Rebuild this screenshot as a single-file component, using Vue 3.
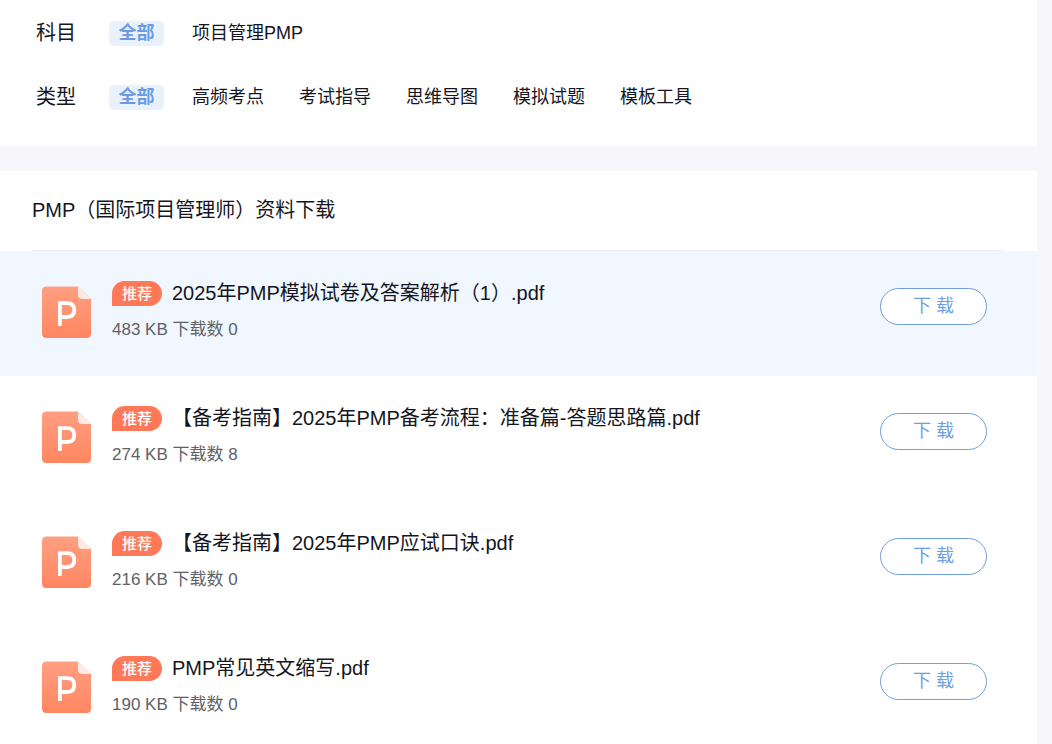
<script setup>
import { ref } from 'vue'

const filters = [
  { key: 'subject', label: '科目', options: ['全部', '项目管理PMP'] },
  { key: 'type', label: '类型', options: ['全部', '高频考点', '考试指导', '思维导图', '模拟试题', '模板工具'] },
]
const selected = ref({ subject: '全部', type: '全部' })

const files = [
  { name: '2025年PMP模拟试卷及答案解析（1）.pdf', size: '483 KB', count: 0 },
  { name: '【备考指南】2025年PMP备考流程：准备篇-答题思路篇.pdf', size: '274 KB', count: 8 },
  { name: '【备考指南】2025年PMP应试口诀.pdf', size: '216 KB', count: 0 },
  { name: 'PMP常见英文缩写.pdf', size: '190 KB', count: 0 },
]
const active = ref(0)
</script>

<template>
  <div class="page">
    <section class="panel filters">
      <div v-for="f in filters" :key="f.key" class="filter">
        <span class="label">{{ f.label }}</span>
        <div class="options" role="group" :aria-label="f.label">
          <button
            v-for="o in f.options"
            :key="o"
            type="button"
            class="option"
            :class="{ on: selected[f.key] === o }"
            :aria-pressed="selected[f.key] === o"
            @click="selected[f.key] = o"
          >{{ o }}</button>
        </div>
      </div>
    </section>

    <section class="panel">
      <h1 class="heading">PMP（国际项目管理师）资料下载</h1>
      <ul class="list">
        <li
          v-for="(file, i) in files"
          :key="file.name"
          class="row"
          :class="{ active: active === i }"
          @mouseenter="active = i"
        >
          <svg class="icon" viewBox="0 0 50 53" aria-hidden="true">
            <defs>
              <linearGradient :id="'sheet' + i" x1="0" y1="0" x2="0" y2="1">
                <stop offset="0" stop-color="#ff9f82" />
                <stop offset="1" stop-color="#ff8661" />
              </linearGradient>
            </defs>
            <path :fill="'url(#sheet' + i + ')'" d="M5.5 .5H37L50 13V47.5Q50 52 45.5 52H5.5Q1 52 1 47.5V5Q1 .5 5.5 .5Z" />
            <path fill="#ffe9e2" d="M37 .5L50 13H41.5Q37 13 37 8.5Z" />
            <path fill="none" stroke="#fff" stroke-width="3.8" d="M18.9 40V17.2H26Q33.3 17.2 33.3 24Q33.3 31 26 31H18.9" />
          </svg>
          <div class="info">
            <div class="title">
              <span class="tag">推荐</span>
              <a class="name" href="#">{{ file.name }}</a>
            </div>
            <div class="meta">{{ file.size }} 下载数 {{ file.count }}</div>
          </div>
          <button type="button" class="download">下 载</button>
        </li>
      </ul>
    </section>
  </div>
</template>

<style>
body {
  margin: 0;
  background: #f6f6fb;
}
</style>

<style scoped>
.page {
  display: flex;
  flex-direction: column;
  gap: 25px;
  padding-right: 15px;
  color: #15161d;
  font-family: "Liberation Sans", "Noto Sans CJK SC", sans-serif;
  font-weight: 400;
}
.panel {
  background: #fff;
}
button {
  font: inherit;
  cursor: pointer;
}
.filters {
  display: flex;
  flex-direction: column;
  gap: 32px;
  padding: 17px 36px 33px;
}
.filter {
  display: flex;
  align-items: center;
  height: 32px;
}
.label {
  width: 73px;
  font-size: 20px;
  line-height: 32px;
}
.options {
  display: flex;
  align-items: center;
  gap: 15px;
}
.option {
  height: 25px;
  padding: 0 10px;
  border: 0;
  border-radius: 5px;
  background: none;
  color: inherit;
  font-size: 18px;
  line-height: 24px;
  white-space: nowrap;
}
.option.on {
  min-width: 55px;
  margin-right: 3px;
  padding: 0 9px;
  background: #e9f1fc;
  color: #6a9be6;
  font-weight: 700;
}
.heading {
  margin: 0 33px 0 32px;
  border-bottom: 1px solid #eeeef2;
  font-size: 20px;
  font-weight: 400;
  line-height: 79px;
}
.list {
  margin: 0;
  padding: 0;
  list-style: none;
}
.row {
  display: flex;
  align-items: flex-start;
  box-sizing: border-box;
  height: 125px;
  padding: 26px 50px 0 41px;
}
.row.active {
  background: #f0f7ff;
}
.icon {
  flex: none;
  width: 50px;
  height: 53px;
  margin: 9px 21px 0 0;
}
.info {
  flex: 1;
  min-width: 0;
}
.title {
  display: flex;
  align-items: center;
  gap: 10px;
  height: 32px;
}
.tag {
  flex: none;
  width: 50px;
  border-radius: 13px 13px 13px 0;
  background: #ff7857;
  color: #fff;
  font-size: 15px;
  font-weight: 500;
  line-height: 25px;
  text-align: center;
}
.name {
  color: inherit;
  font-size: 20px;
  line-height: 32px;
  text-decoration: none;
  white-space: nowrap;
}
.meta {
  margin-top: 7px;
  color: #606266;
  font-size: 17px;
  line-height: 28px;
}
.download {
  flex: none;
  width: 107px;
  height: 37px;
  margin-top: 11px;
  padding: 0;
  border: 1px solid #6f9edf;
  border-radius: 19px;
  background: #fff;
  color: #6f9edf;
  font-size: 18px;
  line-height: 33px;
}
</style>
